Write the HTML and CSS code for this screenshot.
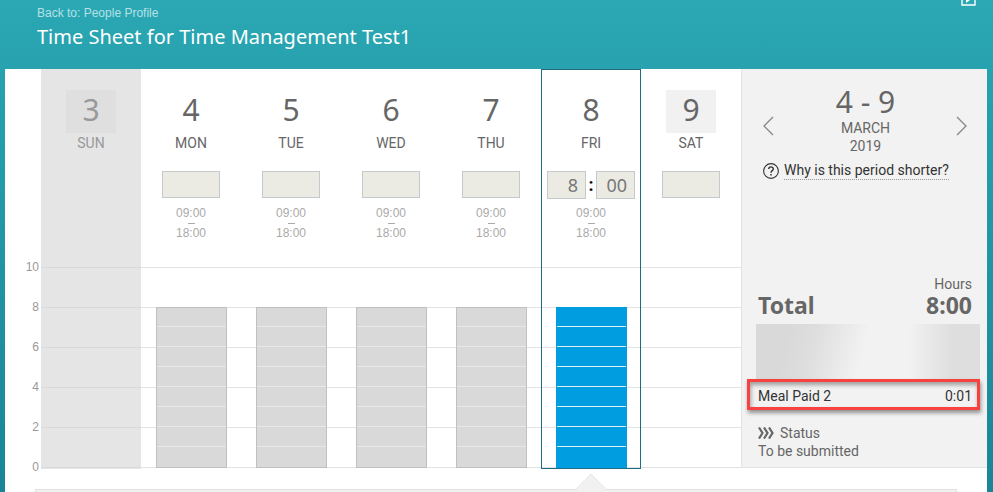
FILE: index.html
```html
<!DOCTYPE html>
<html lang="en">
<head>
    <meta charset="UTF-8">
    <meta name="viewport" content="width=device-width, initial-scale=1.0">
    <title>Time Sheet</title>
    <link rel="stylesheet" href="styles.css">
</head>
<body>

    <!-- Page Header -->
    <header class="header">
        <div>
            <a class="back-link" href="#">Back to: People Profile</a>
            <h1>Time Sheet for Time Management Test1</h1>
        </div>
        <button class="video-btn" type="button" aria-label="Play video">
            <svg width="15" height="6" viewBox="0 0 15 6">
                <path d="M1 0V5H14V0" fill="none" stroke="#fff" stroke-width="1.4"/>
                <path d="M5 0H9L5 3Z" fill="#fff"/>
            </svg>
        </button>
    </header>

    <main class="sheet">
        <div class="board">

            <!-- Hours Scale -->
            <div class="axis">
                <span>10</span>
                <span>8</span>
                <span>6</span>
                <span>4</span>
                <span>2</span>
                <span>0</span>
            </div>

            <!-- Days -->
            <div class="days">
                <section class="day day-off">
                    <div class="day-head">
                        <div class="day-number boxed">3</div>
                        <div class="day-name">SUN</div>
                    </div>
                    <div class="chart"></div>
                </section>

                <section class="day">
                    <div class="day-head">
                        <div class="day-number">4</div>
                        <div class="day-name">MON</div>
                        <div class="entry"><input class="hours" type="text" aria-label="Monday hours"></div>
                        <div class="times"><span>09:00</span><i class="dash"></i><span>18:00</span></div>
                    </div>
                    <div class="chart"><div class="bar"></div></div>
                </section>

                <section class="day">
                    <div class="day-head">
                        <div class="day-number">5</div>
                        <div class="day-name">TUE</div>
                        <div class="entry"><input class="hours" type="text" aria-label="Tuesday hours"></div>
                        <div class="times"><span>09:00</span><i class="dash"></i><span>18:00</span></div>
                    </div>
                    <div class="chart"><div class="bar"></div></div>
                </section>

                <section class="day">
                    <div class="day-head">
                        <div class="day-number">6</div>
                        <div class="day-name">WED</div>
                        <div class="entry"><input class="hours" type="text" aria-label="Wednesday hours"></div>
                        <div class="times"><span>09:00</span><i class="dash"></i><span>18:00</span></div>
                    </div>
                    <div class="chart"><div class="bar"></div></div>
                </section>

                <section class="day">
                    <div class="day-head">
                        <div class="day-number">7</div>
                        <div class="day-name">THU</div>
                        <div class="entry"><input class="hours" type="text" aria-label="Thursday hours"></div>
                        <div class="times"><span>09:00</span><i class="dash"></i><span>18:00</span></div>
                    </div>
                    <div class="chart"><div class="bar"></div></div>
                </section>

                <section class="day selected">
                    <div class="day-head">
                        <div class="day-number">8</div>
                        <div class="day-name">FRI</div>
                        <div class="entry">
                            <input class="part" type="text" value="8" aria-label="Friday hours">
                            <span class="colon">:</span>
                            <input class="part" type="text" value="00" aria-label="Friday minutes">
                        </div>
                        <div class="times"><span>09:00</span><i class="dash"></i><span>18:00</span></div>
                    </div>
                    <div class="chart"><div class="bar"></div></div>
                    <svg class="pointer" width="32" height="17" viewBox="0 0 32 17">
                        <path d="M0 17L16 0L32 17Z" fill="#f1f1f1"/>
                        <path d="M0 16L16 0L32 16" fill="none" stroke="#e6e6e6"/>
                    </svg>
                </section>

                <section class="day">
                    <div class="day-head">
                        <div class="day-number boxed">9</div>
                        <div class="day-name">SAT</div>
                        <div class="entry"><input class="hours" type="text" aria-label="Saturday hours"></div>
                    </div>
                    <div class="chart"></div>
                </section>
            </div>

            <!-- Summary -->
            <aside class="side">
                <div class="period">
                    <button class="nav-btn" type="button" aria-label="Previous period">
                        <svg width="12" height="20" viewBox="0 0 12 20"><path d="M10 1L1 10L10 19" fill="none" stroke="#858585" stroke-width="1.3"/></svg>
                    </button>
                    <div class="period-text">
                        <div class="period-days">4 - 9</div>
                        <div>MARCH</div>
                        <div>2019</div>
                    </div>
                    <button class="nav-btn" type="button" aria-label="Next period">
                        <svg width="12" height="20" viewBox="0 0 12 20"><path d="M1 1L10 10L1 19" fill="none" stroke="#858585" stroke-width="1.3"/></svg>
                    </button>
                </div>

                <div class="help">
                    <svg width="16" height="16" viewBox="0 0 16 16" fill="none" stroke="#333">
                        <circle cx="8" cy="8" r="7.4" stroke-width="1.1"/>
                        <path d="M5.7 6.1C5.7 3.1 10.4 3.2 10.3 6C10.2 7.8 8 7.6 8 9.7" stroke-width="1.4"/>
                        <path d="M8 11V12.5" stroke-width="1.5"/>
                    </svg>
                    <a href="#">Why is this period shorter?</a>
                </div>

                <div class="totals">
                    <div class="unit">Hours</div>
                    <div class="total"><span>Total</span><span>8:00</span></div>
                </div>
                <div class="hidden-rows"></div>
                <div class="row highlight"><span>Meal Paid 2</span><span>0:01</span></div>

                <div class="status">
                    <div class="status-title">
                        <svg width="16" height="12" viewBox="0 0 16 12" fill="none" stroke="#666" stroke-width="2.2">
                            <path d="M1 0.5L4.5 6L1 11.5M6 0.5L9.5 6L6 11.5M11 0.5L14.5 6L11 11.5"/>
                        </svg>
                        <span>Status</span>
                    </div>
                    <div>To be submitted</div>
                </div>
            </aside>
        </div>

        <div class="details"></div>
    </main>

</body>
</html>
```
FILE: styles.css
```css
/* General Styling */
* {
    box-sizing: border-box;
}

body {
    display: flex;
    flex-direction: column;
    min-height: 100vh;
    margin: 0;
    background: linear-gradient(#2ba8b4, #27a2ae 14%, #1a8598);
    font-family: Roboto, "Liberation Sans", sans-serif;
    font-size: 14px;
    line-height: 18px;
    color: #666;
}

button {
    padding: 0;
    border: none;
    background: none;
    cursor: pointer;
}

svg {
    display: block;
}

/* Header */
.header {
    display: flex;
    justify-content: space-between;
    align-items: flex-start;
    flex: none;
    height: 69px;
    padding: 0 17px 0 37px;
}

.back-link {
    display: block;
    margin-top: 6px;
    font-family: "Liberation Sans", sans-serif;
    font-size: 12px;
    line-height: 14px;
    color: #b5e1e6;
    text-decoration: none;
}

h1 {
    margin: 4px 0 0;
    font-family: "Noto Sans", sans-serif;
    font-size: 20px;
    font-weight: normal;
    line-height: 26px;
    color: #fff;
}

/* Sheet */
.sheet {
    display: flex;
    flex-direction: column;
    flex: 1;
    margin: 0 6px 0 5px;
    background: #fff;
}

.board {
    display: grid;
    grid-template-columns: 36px 1fr 246px;
}

.axis {
    display: flex;
    flex-direction: column;
    gap: 20px;
    margin-bottom: -10px;
    padding: 188px 2px 0 0;
    font-family: "Liberation Sans", sans-serif;
    font-size: 12px;
    line-height: 20px;
    text-align: right;
    color: #999;
}

.days {
    display: grid;
    grid-template-columns: repeat(7, 1fr);
}

/* Day Column */
.day {
    position: relative;
    text-align: center;
}

.day-off {
    background: #e5e5e5;
}

.day-off .day-head {
    color: #999;
}

.selected {
    outline: 1px solid #1d6d80;
    outline-offset: -1px;
}

.day-head {
    height: 198px;
    padding-top: 21px;
}

.day-number {
    width: 50px;
    margin: 0 auto;
    padding-bottom: 4px;
    font-family: "Noto Sans", sans-serif;
    font-size: 30px;
    line-height: 39px;
}

.boxed {
    background: #f1f1f1;
}

.day-off .boxed {
    background: #dfdfdf;
}

.day-name {
    line-height: 20px;
}

.entry {
    display: flex;
    justify-content: center;
    align-items: flex-start;
    height: 28px;
    margin-top: 18px;
}

.entry input {
    height: 28px;
    border: 1px solid #c3cacc;
    background: #ebebe4;
    font-family: "Noto Sans", sans-serif;
    font-size: 18px;
    text-align: right;
    color: #777;
}

.entry .hours {
    width: 58px;
    height: 27px;
}

.part {
    width: 39px;
    padding: 0 7px;
}

.colon {
    width: 10px;
    font-size: 18px;
    font-weight: bold;
    line-height: 28px;
    color: #000;
}

.times {
    display: flex;
    flex-direction: column;
    align-items: center;
    gap: 2px;
    margin-top: 7px;
    font-family: "Liberation Sans", sans-serif;
    font-size: 12px;
    line-height: 14px;
    color: #aaa;
}

.dash {
    width: 7px;
    height: 1px;
    margin-top: 1px;
    background: #aaa;
}

/* Chart */
.chart {
    display: flex;
    justify-content: center;
    align-items: flex-end;
    height: 202px;
    padding-bottom: 1px;
    background: repeating-linear-gradient(#e3e3e3 0 1px, transparent 1px 40px);
}

.day-off .chart {
    background: repeating-linear-gradient(#d9d9d9 0 1px, transparent 1px 40px);
}

.bar {
    width: 71px;
    height: 161px;
    border: 1px solid #c0c0c0;
    background: repeating-linear-gradient(#d9d9d9 0 18px, #e8e8e8 18px 19px, #d9d9d9 19px 20px) no-repeat 0 0 / 100% 140px #d9d9d9;
}

.selected .bar {
    border-color: #009de0;
    background: repeating-linear-gradient(#009de0 0 18px, #e3eef2 18px 19px, #009de0 19px 20px) no-repeat 0 0 / 100% 140px #009de0;
}

.pointer {
    position: absolute;
    left: 50%;
    bottom: -22px;
    transform: translateX(-50%);
}

/* Summary */
.side {
    margin-bottom: 1px;
    border-left: 1px solid #e3e3e3;
    border-bottom: 1px solid #e3e3e3;
    background: #f2f2f2;
}

.period {
    display: flex;
    justify-content: space-between;
    align-items: center;
    padding: 16px 19px 0 21px;
    text-align: center;
}

.period-days {
    font-family: "Noto Sans", sans-serif;
    font-size: 30px;
    line-height: 34px;
}

.nav-btn {
    margin-top: 12px;
}

.help {
    display: flex;
    align-items: center;
    gap: 5px;
    margin-top: 7px;
    padding-left: 21px;
}

.help a {
    border-bottom: 1px dotted #999;
    line-height: 17px;
    color: #333;
    text-decoration: none;
}

.totals {
    margin-top: 95px;
    padding: 0 15px 0 16px;
}

.unit {
    text-align: right;
}

.total {
    display: flex;
    justify-content: space-between;
    font-family: "Noto Sans", sans-serif;
    font-size: 23px;
    font-weight: bold;
    line-height: 25px;
}

.hidden-rows {
    height: 55px;
    margin: 6px 7px 0 14px;
    background:
        linear-gradient(90deg, transparent 68%, #dedede 88%),
        linear-gradient(105deg, #d9d9d9 15%, #dedede 26%, #f2f2f2 48%);
}

.row {
    display: flex;
    justify-content: space-between;
    color: #333;
}

.highlight {
    margin: 0 7px 0 5px;
    padding: 5px 5px 2px 8px;
    border: 3px solid #f9423f;
    box-shadow: 1px 3px 4px rgba(0, 0, 0, 0.4), inset 1px 3px 4px rgba(0, 0, 0, 0.35);
}

.status {
    padding: 14px 16px 7px;
}

.status-title {
    display: flex;
    align-items: center;
    gap: 6px;
}

/* Details Panel */
.details {
    flex: 1;
    margin: 20px 30px 0;
    border: 1px solid #e0e0e0;
    border-bottom: none;
    background: #f1f1f1;
}
```
